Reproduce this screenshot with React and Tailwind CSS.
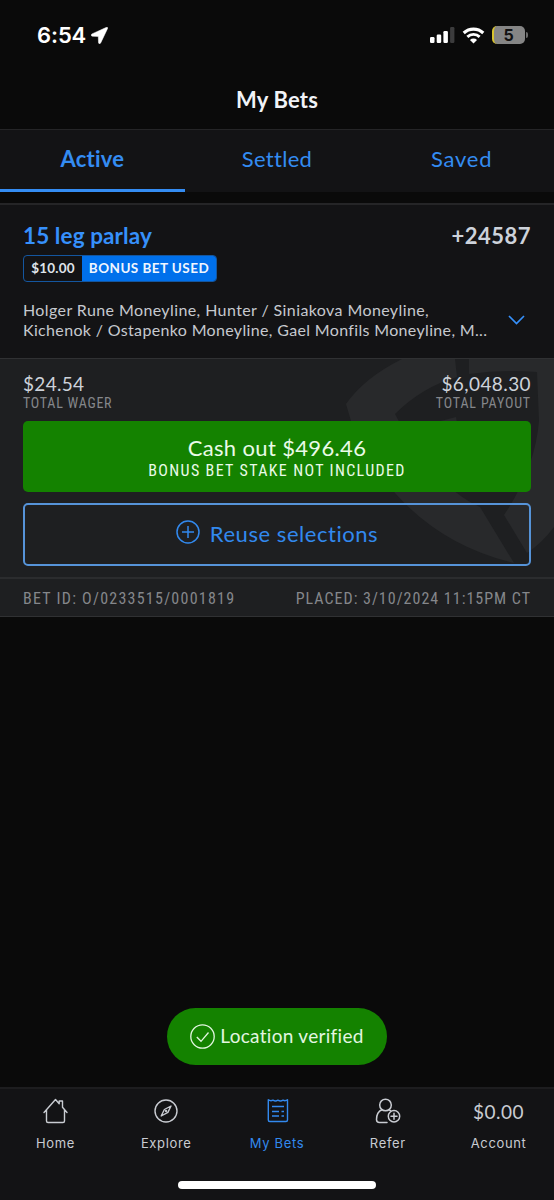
import React from "react";

const tabs = [
  { label: "Active", active: true, text: "text-[22px] font-bold tracking-[0.2px]" },
  { label: "Settled", active: false, text: "text-[22px] tracking-[0.3px]" },
  { label: "Saved", active: false, text: "text-[22px] tracking-[0.8px]" },
];

const StatusBar = () => (
  <div className="flex h-[70px] items-center justify-between pl-[37px] pr-[26px]">
    <div className="flex items-center gap-[5px] text-white">
      <span className="font-['Inter',sans-serif] text-[22px] font-semibold leading-none tracking-[-0.1px]">6:54</span>
      <svg className="h-[17px] w-[17px]" viewBox="0 0 17 17" fill="currentColor" stroke="currentColor" strokeWidth="0.5">
        <path d="M15.6.3 1 6.9C-.3 7.6 0 9.1 1.3 9.2L7.3 9.4 7.5 15.4C7.6 17 9.1 17.1 9.7 15.9L16.6 1.4C17 .5 16.3 0 15.6.3Z" />
      </svg>
    </div>
    <div className="flex items-center">
      <svg className="mb-px h-[17px] w-[25px]" viewBox="0 0 25 17" fill="#fff">
        <rect x="0" y="11" width="4.5" height="6" rx="1.2" />
        <rect x="6.7" y="8.5" width="4.5" height="8.5" rx="1.2" />
        <rect x="13.4" y="5" width="4.5" height="12" rx="1.2" />
        <rect x="20.1" y="1" width="4.3" height="16" rx="1.2" fill="#3c3c3d" />
      </svg>
      <svg className="ml-[7px] h-[17px] w-[23px]" viewBox="0 0 24 17" fill="none" stroke="#fff">
        <path d="M1.8 5.9A15 15 0 0 1 22.2 5.9" strokeWidth="3.3" />
        <path d="M5.6 9.9A9.3 9.3 0 0 1 18.4 9.9" strokeWidth="3" />
        <path d="M8.3 13.1A5.2 5.2 0 0 1 15.7 13.1L12 16.9Z" fill="#fff" stroke="none" />
      </svg>
      <div className="ml-[7px] flex h-[18px] w-[33px] items-center justify-center overflow-hidden rounded-[5px] border-l-2 border-[#d8c32e] bg-[#858585] pr-[2px] font-['Inter',sans-serif] text-[16px] font-bold text-[#111]">
        5
      </div>
      <div className="ml-px h-[6px] w-[2px] rounded-r-full bg-[#6b6b6b]" />
    </div>
  </div>
);

const ShieldMark = () => (
  <svg className="absolute right-0 top-0 h-[219px] w-[277px]" viewBox="0 0 277 219" fill="#28292b">
    <path d="M125 0Q87 19 69 45L74 62Q88 100 118 134Q165 187 237 204L203 148Q178 137 155 110Q130 80 118 55Q145 28 180 18L178 0Z" />
    <path d="M160 63 179 58 180 64Z" />
    <path d="M192 0H277V168Q265 184 250 194L227 156Q258 110 262 62L260 13Q225 10 192 15Z" />
  </svg>
);

const BetCard = () => (
  <div className="border-b border-t-2 border-b-[#303133] border-t-[#252527] bg-[#131315]">
    <div className="h-[153px] px-[23px] pt-[17px]">
      <div className="flex items-center justify-between font-bold leading-[28px]">
        <span className="text-[22.5px] tracking-[0.1px] text-[#3690fb]">15 leg parlay</span>
        <span className="text-[22px] tracking-[0.5px] text-[#cdd2da]">+24587</span>
      </div>
      <div className="mt-[5px] flex h-[27px] w-[194px] overflow-hidden rounded-[4px] border border-[#14569f] text-[13.5px] font-bold leading-[25px]">
        <span className="w-[58px] text-center tracking-[0.2px] text-[#dfe3ea]">$10.00</span>
        <span className="flex-1 whitespace-nowrap bg-[#0070eb] text-center tracking-[0.45px] text-[#f0f6ff]">BONUS BET USED</span>
      </div>
      <div className="mt-[18px] flex items-center justify-between">
        <p className="whitespace-nowrap text-[16px] leading-[20px] tracking-[0.34px] text-[#c6c9cf]">
          <span className="tracking-[0.4px]">Holger Rune Moneyline, Hunter / Siniakova Moneyline,</span>
          <br />
          Kichenok / Ostapenko Moneyline, Gael Monfils Moneyline, M...
        </p>
        <svg className="mr-[6px] h-[10px] w-[17px] shrink-0" viewBox="0 0 17 10" fill="none" stroke="#3690fb" strokeWidth="1.7">
          <path d="M1 1 8.5 8.5 16 1" />
        </svg>
      </div>
    </div>

    <div className="relative h-[219px] border-t border-[#303133] bg-[#1e1f21] px-[23px] pt-[13px]">
      <ShieldMark />
      <div className="relative">
        <div className="flex items-start justify-between text-[#cdd2da]">
          <div>
            <p className="text-[19px] leading-[23px] tracking-[0.3px]">$24.54</p>
            <p className="font-['Roboto',sans-serif] text-[14px] leading-[17px] tracking-[0.75px] text-[#85878b] [font-stretch:75%]">TOTAL WAGER</p>
          </div>
          <div className="text-right">
            <p className="text-[19px] leading-[23px] tracking-[0.4px]">$6,048.30</p>
            <p className="font-['Roboto',sans-serif] text-[14px] leading-[17px] tracking-[0.85px] text-[#85878b] [font-stretch:75%]">TOTAL PAYOUT</p>
          </div>
        </div>
        <button className="mt-[9px] flex h-[71px] w-full flex-col items-center rounded-[5px] bg-[#148200] pt-[13px] text-[#eafbe8]">
          <span className="text-[22px] leading-[28px] tracking-[0.35px]">Cash out $496.46</span>
          <span className="font-['Roboto',sans-serif] text-[16px] leading-[18px] tracking-[1.35px] [font-stretch:75%]">BONUS BET STAKE NOT INCLUDED</span>
        </button>
        <button className="mt-[11px] flex h-[63px] w-full items-center justify-center gap-[10px] rounded-[5px] border-2 border-[#5693d8] text-[#3289ee]">
          <svg className="mb-[5px] h-[24px] w-[24px]" viewBox="0 0 24 24" fill="none" stroke="currentColor" strokeWidth="1.5">
            <circle cx="12" cy="12" r="11" />
            <path d="M6 12H18M12 6V18" />
          </svg>
          <span className="mb-[2px] text-[22px] tracking-[0.55px]">Reuse selections</span>
        </button>
      </div>
    </div>

    <div className="flex h-[39px] items-center justify-between border-t-2 border-[#2b2c2e] bg-[#1e1f21] px-[23px] pt-[3px] font-['Roboto',sans-serif] text-[16px] text-[#85878b] [font-stretch:75%]">
      <span className="tracking-[1.25px]">BET ID: O/0233515/0001819</span>
      <span className="tracking-[1px]">PLACED: 3/10/2024 11:15PM CT</span>
    </div>
  </div>
);

const NavItem = ({ label, active, children }) => (
  <div className={active ? "flex flex-1 flex-col items-center text-[#3289ee]" : "flex flex-1 flex-col items-center text-[#c9ccd2]"}>
    <div className="flex h-[26px] items-center">{children}</div>
    <span className="mt-[10px] font-['Inter',sans-serif] text-[13px] leading-[18px] tracking-[0.65px]">{label}</span>
  </div>
);

const BottomNav = () => (
  <div className="h-[113px] border-t-2 border-[#1d1d1f] bg-[#131315] pt-[9px]">
    <div className="flex">
      <NavItem label="Home">
        <svg className="h-[26px] w-[26px]" viewBox="0 0 26 26" fill="none" stroke="currentColor" strokeWidth="1.4" strokeLinejoin="round" strokeLinecap="round">
          <path d="M2 14.5 13.5 1.5 17.2 5.7V3H20.5V9.3L25 14.5M4.5 12V23Q4.5 24.5 6 24.5H21Q22.5 24.5 22.5 23V12" />
        </svg>
      </NavItem>
      <NavItem label="Explore">
        <svg className="h-[26px] w-[26px]" viewBox="0 0 26 26" fill="none" stroke="currentColor" strokeWidth="1.4" strokeLinejoin="round">
          <circle cx="13" cy="13" r="11" />
          <path d="M18 8 14.9 14.4 8.2 18 11.4 11.5Z" />
          <circle cx="13.1" cy="13" r="0.5" />
        </svg>
      </NavItem>
      <NavItem label="My Bets" active>
        <svg className="h-[26px] w-[26px]" viewBox="0 0 26 26" fill="none" stroke="currentColor" strokeWidth="1.4" strokeLinejoin="round">
          <path d="M4.3 1.8Q6.5 3.5 9 2.2Q11.5 3.7 13.9 2.2Q16.5 3.7 19 2.2Q21.3 3.5 23.5 1.8V22Q23.5 23.5 22 23.5H5.8Q4.3 23.5 4.3 22Z" />
          <path d="M8 8.5H20M8 13.5H15M17.5 13.5H20M8 18H15M17.5 18H20" />
        </svg>
      </NavItem>
      <NavItem label="Refer">
        <svg className="h-[26px] w-[26px]" viewBox="0 0 26 26" fill="none" stroke="currentColor" strokeWidth="1.5" strokeLinecap="round">
          <circle cx="10.5" cy="7" r="5.8" />
          <path d="M7 11.8C3 13.5 1.5 17 1.5 21.5Q1.5 24.5 4.5 24.5H12M14 11.8 15.5 12.6" />
          <circle cx="19" cy="18.3" r="5.7" />
          <path d="M16 18.3H22M19 15.3V21.3" />
        </svg>
      </NavItem>
      <NavItem label="Account">
        <span className="text-[19px] leading-none tracking-[0.5px]">$0.00</span>
      </NavItem>
    </div>
    <div className="mx-auto mt-[29px] h-[8px] w-[198px] rounded-full bg-white" />
  </div>
);

const App = () => {
  return (
    <div className="flex h-[1200px] w-[554px] flex-col overflow-hidden bg-[#0a0a0a] font-['Lato',sans-serif]">
      <StatusBar />
      <div className="flex h-[59px] items-center justify-center pb-px text-[22px] font-bold tracking-[0.2px] text-[#f1f3f8]">My Bets</div>
      <div className="flex h-[63px] border-t border-[#252527] bg-[#131315]">
        {tabs.map((tab) => (
          <div
            key={tab.label}
            className={
              tab.active
                ? "flex flex-1 items-center justify-center border-b-[3px] border-[#348cf2] pb-[2px]"
                : "flex flex-1 items-center justify-center border-b-[3px] border-transparent pb-[2px]"
            }
          >
            <span className={`${tab.text} text-[#348cf2]`}>{tab.label}</span>
          </div>
        ))}
      </div>
      <div className="h-[11px] shrink-0" />
      <BetCard />
      <div className="flex flex-1 items-end justify-center pb-[22px]">
        <div className="flex h-[57px] w-[220px] items-center justify-center gap-[5px] rounded-full bg-[#148200] text-[#e3f6e0]">
          <svg className="h-[25px] w-[25px]" viewBox="0 0 25 25" fill="none" stroke="currentColor" strokeWidth="1.3">
            <circle cx="12.5" cy="12.5" r="11.7" />
            <path d="M6.8 13 11 17.3 18.5 8.5" />
          </svg>
          <span className="text-[19px] tracking-[0.3px]">Location verified</span>
        </div>
      </div>
      <BottomNav />
    </div>
  );
};

export default App;
